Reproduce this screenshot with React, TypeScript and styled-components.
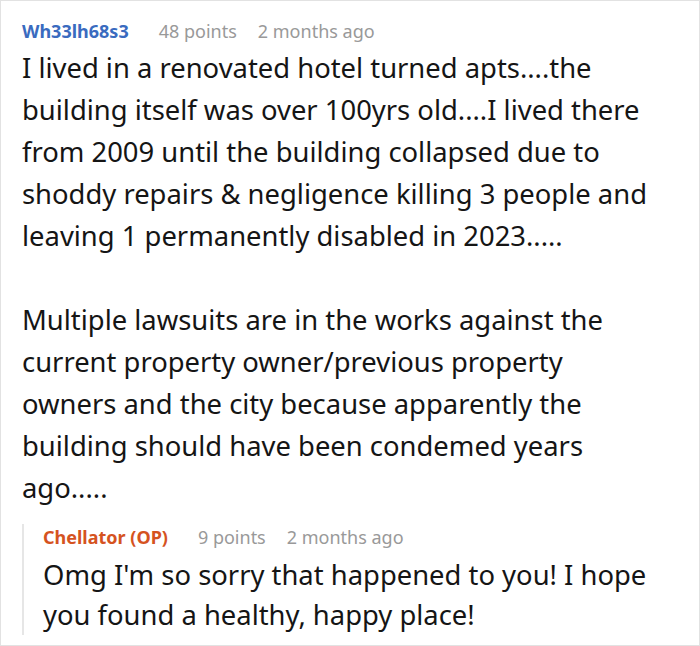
import React from "react";
import styled, { createGlobalStyle } from "styled-components";

const GlobalStyle = createGlobalStyle`
  html, body {
    margin: 0;
    padding: 0;
    background: #ffffff;
  }
  body {
    font-family: "Noto Sans", "Open Sans", "Liberation Sans", sans-serif;
  }
`;

interface CommentData {
  author: string;
  isOp?: boolean;
  points: string;
  time: string;
  paragraphs: string[];
}

const main: CommentData = {
  author: "Wh33lh68s3",
  points: "48 points",
  time: "2 months ago",
  paragraphs: [
    "I lived in a renovated hotel turned apts....the building itself was over 100yrs old....I lived there from 2009 until the building collapsed due to shoddy repairs & negligence killing 3 people and leaving 1 permanently disabled in 2023.....",
    "Multiple lawsuits are in the works against the current property owner/previous property owners and the city because apparently the building should have been condemed years ago.....",
  ],
};

const reply: CommentData = {
  author: "Chellator (OP)",
  isOp: true,
  points: "9 points",
  time: "2 months ago",
  paragraphs: ["Omg I'm so sorry that happened to you! I hope you found a healthy, happy place!"],
};

const Comment = ({ data }: { data: CommentData }) => (
  <>
    <Meta>
      <Author isOp={data.isOp}>{data.author}</Author>
      <Points>{data.points}</Points>
      <Time>{data.time}</Time>
    </Meta>
    <Body>
      {data.paragraphs.map((p, i) => (
        <Paragraph key={i}>{p}</Paragraph>
      ))}
    </Body>
  </>
);

const App = () => {
  return (
    <>
      <GlobalStyle />
      <Card>
        <Comment data={main} />
        <Reply>
          <Comment data={reply} />
        </Reply>
      </Card>
    </>
  );
};

const Card = styled.div`
  box-sizing: border-box;
  width: 700px;
  height: 646px;
  border: 1px solid #e2e2e2;
  padding: 17px 36px 0 21px;
  overflow: hidden;
`;

const Meta = styled.div`
  display: flex;
  align-items: baseline;
  font-size: 18px;
  line-height: 26px;
  white-space: nowrap;
`;

const Author = styled.span<{ isOp?: boolean }>`
  font-weight: 700;
  color: ${(p) => (p.isOp ? "#d5531f" : "#3a6bbf")};
  margin-right: 30px;
`;

const Points = styled.span`
  color: #999999;
  margin-right: 21px;
`;

const Time = styled.span`
  color: #999999;
`;

const Body = styled.div`
  margin-top: 3.4px;
  font-size: 27.4px;
  line-height: 42px;
  color: #151515;
`;

const Paragraph = styled.p`
  margin: 0;
  & + & {
    margin-top: 42px;
  }
`;

const Reply = styled.div`
  margin-top: 27.5px;
  margin-right: -16px;
  border-left: 2px solid #e6e6e6;
  padding-left: 19px;
  & > ${Meta} {
    margin-top: -13px;
  }
  & > ${Body} {
    margin-top: 5px;
    margin-bottom: -8px;
    line-height: 40px;
  }
`;

export default App;
